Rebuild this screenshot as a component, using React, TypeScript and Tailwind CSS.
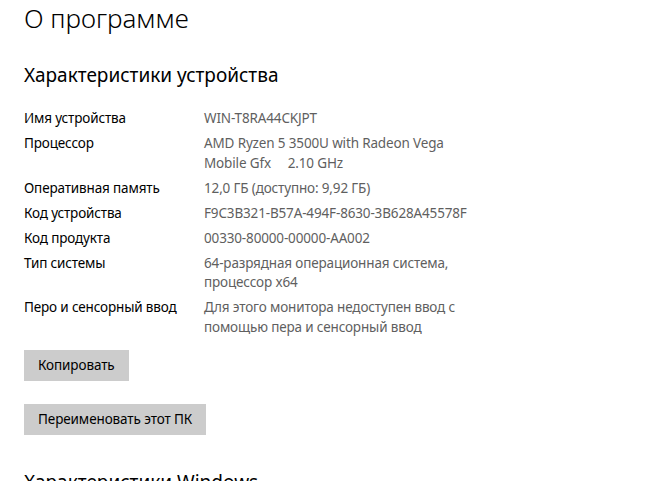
export default function App() {
  const rows: { label: string; value: string[] }[] = [
    { label: 'Имя устройства', value: ['WIN-T8RA44CKJPT'] },
    { label: 'Процессор', value: ['AMD Ryzen 5 3500U with Radeon Vega', 'Mobile Gfx\u00a0\u00a0\u00a0\u00a0 2.10 GHz'] },
    { label: 'Оперативная память', value: ['12,0 ГБ (доступно: 9,92 ГБ)'] },
    { label: 'Код устройства', value: ['F9C3B321-B57A-494F-8630-3B628A45578F'] },
    { label: 'Код продукта', value: ['00330-80000-00000-AA002'] },
    { label: 'Тип системы', value: ['64-разрядная операционная система,', 'процессор x64'] },
    { label: 'Перо и сенсорный ввод', value: ['Для этого монитора недоступен ввод с', 'помощью пера и сенсорный ввод'] },
  ]

  return (
    <div className="w-[649px] h-[481px] overflow-hidden bg-white pl-6 text-black font-['Noto_Sans',sans-serif]">
      <h1 className="text-[26px] leading-[36px] font-light">О программе</h1>

      <h2 className="mt-[26px] text-[19px] leading-[26px]">Характеристики устройства</h2>

      {/* spec table */}
      <div className="mt-[21px] flex flex-col gap-[5.5px] text-[13.5px] leading-[19.5px] tracking-[-0.15px]">
        {rows.map(r => (
          <div key={r.label} className="flex">
            <div className="w-[180px] shrink-0">{r.label}</div>
            <div className="text-[#5f5f5f]">
              {r.value.map(v => <div key={v}>{v}</div>)}
            </div>
          </div>
        ))}
      </div>

      <div className="mt-[13px] flex flex-col items-start gap-[23px] text-[13.5px] tracking-[-0.1px]">
        <button className="w-[105px] h-[31px] bg-[#cccccc] text-left pl-[14px]">Копировать</button>
        <button className="w-[182px] h-[31px] bg-[#cccccc] text-left pl-[14px]">Переименовать этот ПК</button>
      </div>

      <h2 className="mt-[34px] text-[19px] leading-[26px]">Характеристики Windows</h2>
    </div>
  )
}
